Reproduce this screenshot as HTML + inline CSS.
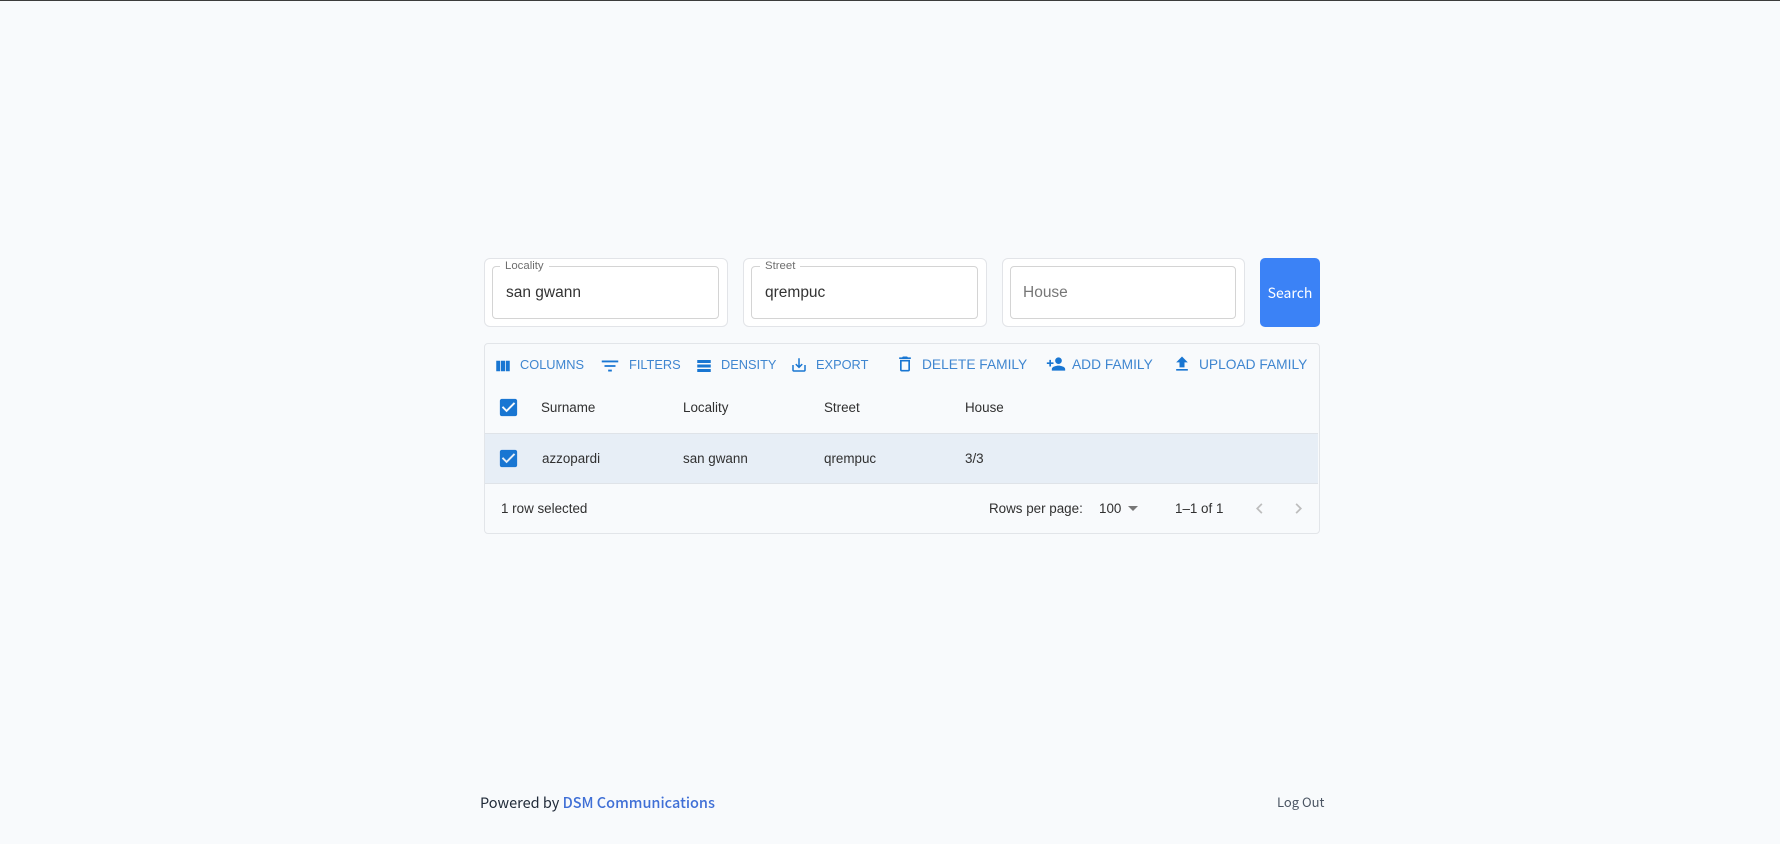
<!DOCTYPE html>
<html><head><meta charset="utf-8"><style>
html,body{margin:0;padding:0}
body{width:1780px;height:844px;background:#f8fafc;position:relative;overflow:hidden;font-family:"Liberation Sans",Arial,sans-serif;color:#222}
#w{position:absolute;left:0;top:0;width:1780px;height:844px;filter:blur(.3px)}
.a{position:absolute;white-space:nowrap}
.card{position:absolute;top:258px;height:67px;width:242px;border:1px solid #e2e4e8;border-radius:6px;background:#fff}
.in{position:absolute;top:266px;height:51px;width:225px;border:1px solid #d4d4d4;border-radius:4px;background:#fff}
.lab{position:absolute;top:260px;height:13px;line-height:13px;background:#fff;padding:0 5px;font-size:11.4px;color:#6e6e6e}
.v{position:absolute;top:283px;line-height:20px;font-size:15.5px;color:#333}
.b{position:absolute;top:357px;line-height:15px;font-size:12.8px;color:#3f86d0;white-space:nowrap}
.r{font-size:13.75px}
.c{position:absolute;line-height:16px;font-size:13.4px;color:#303030;white-space:nowrap}
svg{position:absolute;display:block}
.i{fill:#1976d2}
.s{font-family:"Noto Sans CJK JP","Liberation Sans",sans-serif}
</style></head><body><div id="w">
<div class="a" style="left:0;top:0;width:1780px;height:1px;background:#3c3c3c"></div>

<div class="card" style="left:484px"></div><div class="in" style="left:492px"></div>
<div class="lab" style="left:500px">Locality</div><div class="v" style="left:506px">san gwann</div>
<div class="card" style="left:743px"></div><div class="in" style="left:751px"></div>
<div class="lab" style="left:760px">Street</div><div class="v" style="left:765px">qrempuc</div>
<div class="card" style="left:1002px;width:241px"></div><div class="in" style="left:1010px;width:224px"></div>
<div class="v" style="left:1023px;color:#777">House</div>
<div class="a s" style="left:1260px;top:258px;width:60px;height:69px;background:#3b82f6;border-radius:5px;color:#fff;font-size:14px;line-height:71px;text-align:center">Search</div>

<div class="a" style="left:484px;top:343px;width:834px;height:189px;border:1px solid #e2e5e9;border-radius:4px"></div>
<div class="a" style="left:485px;top:433px;width:833px;height:49px;background:#e7eef6;border-top:1px solid #dfe3e8;border-bottom:1px solid #dfe3e8"></div>

<svg class="i" style="left:494px;top:357px" width="18" height="18" viewBox="0 0 24 24"><path d="M14.67 5v14H9.33V5h5.34zm1 14H21V5h-5.33v14zm-7.34 0V5H3v14h5.33z"/></svg>
<div class="b" style="left:520px">COLUMNS</div>
<svg class="i" style="left:599px;top:355px" width="22" height="22" viewBox="0 0 24 24"><path d="M10 18h4v-2h-4v2zM3 6v2h18V6H3zm3 7h12v-2H6v2z"/></svg>
<div class="b" style="left:629px">FILTERS</div>
<svg class="i" style="left:695px;top:357px" width="18" height="18" viewBox="0 0 24 24"><path d="M21,8H3V4h18V8z M21,10H3v4h18V10z M21,16H3v4h18V16z"/></svg>
<div class="b" style="left:721px">DENSITY</div>
<svg class="i" style="left:790px;top:356px" width="18" height="18" viewBox="0 0 24 24"><path d="M19 12v7H5v-7H3v7c0 1.1.9 2 2 2h14c1.1 0 2-.9 2-2v-7h-2zm-6 .67l2.59-2.58L17 11.5l-5 5-5-5 1.41-1.41L11 12.67V3h2z"/></svg>
<div class="b" style="left:816px">EXPORT</div>

<svg class="i" style="left:895px;top:354px" width="20" height="20" viewBox="0 0 24 24"><path d="M6 19c0 1.1.9 2 2 2h8c1.1 0 2-.9 2-2V7H6v12zM8 9h8v10H8V9zm7.5-5l-1-1h-5l-1 1H5v2h14V4z"/></svg>
<div class="b r" style="left:922px">DELETE FAMILY</div>
<svg class="i" style="left:1046px;top:354px" width="20" height="20" viewBox="0 0 24 24"><path d="M15 12c2.21 0 4-1.79 4-4s-1.79-4-4-4-4 1.79-4 4 1.79 4 4 4zm-9-2V7H4v3H1v2h3v3h2v-3h3v-2H6zm9 4c-2.67 0-8 1.34-8 4v2h16v-2c0-2.66-5.33-4-8-4z"/></svg>
<div class="b r" style="left:1072px">ADD FAMILY</div>
<svg class="i" style="left:1172px;top:354px" width="20" height="20" viewBox="0 0 24 24"><path d="M5 20h14v-2H5v2zm0-10h4v6h6v-6h4l-7-7-7 7z"/></svg>
<div class="b r" style="left:1199px">UPLOAD FAMILY</div>

<svg class="i" style="left:497px;top:396px" width="23" height="23" viewBox="0 0 24 24"><path d="M19 3H5c-1.11 0-2 .9-2 2v14c0 1.1.89 2 2 2h14c1.11 0 2-.9 2-2V5c0-1.1-.89-2-2-2zm-9 14l-5-5 1.41-1.41L10 14.17l7.59-7.59L19 8l-9 9z"/></svg>
<div class="c" style="left:541px;top:400px">Surname</div>
<div class="c" style="left:683px;top:400px">Locality</div>
<div class="c" style="left:824px;top:400px">Street</div>
<div class="c" style="left:965px;top:400px">House</div>

<svg class="i" style="left:497px;top:447px" width="23" height="23" viewBox="0 0 24 24"><path d="M19 3H5c-1.11 0-2 .9-2 2v14c0 1.1.89 2 2 2h14c1.11 0 2-.9 2-2V5c0-1.1-.89-2-2-2zm-9 14l-5-5 1.41-1.41L10 14.17l7.59-7.59L19 8l-9 9z"/></svg>
<div class="c" style="left:542px;top:451px">azzopardi</div>
<div class="c" style="left:683px;top:451px">san gwann</div>
<div class="c" style="left:824px;top:451px">qrempuc</div>
<div class="c" style="left:965px;top:451px">3/3</div>

<div class="c" style="left:501px;top:501px">1 row selected</div>
<div class="c" style="left:989px;top:501px">Rows per page:</div>
<div class="c" style="left:1099px;top:501px">100</div>
<svg style="left:1121px;top:496px;fill:#777" width="24" height="24" viewBox="0 0 24 24"><path d="M7 10l5 5 5-5z"/></svg>
<div class="c" style="left:1175px;top:501px">1–1 of 1</div>
<svg style="left:1249px;top:498px;fill:#bdbdbd" width="21" height="21" viewBox="0 0 24 24"><path d="M15.41 7.41L14 6l-6 6 6 6 1.41-1.41L10.83 12z"/></svg>
<svg style="left:1288px;top:498px;fill:#bdbdbd" width="21" height="21" viewBox="0 0 24 24"><path d="M10 6L8.59 7.41 13.17 12l-4.58 4.59L10 18l6-6z"/></svg>

<div class="a s" style="left:480px;top:793px;line-height:20px;font-size:14.5px;color:#1f2937">Powered by <span style="color:#3f6fd6;font-weight:500">DSM Communications</span></div>
<div class="a s" style="left:1277px;top:792px;line-height:20px;font-size:13px;color:#4b5563">Log Out</div>
</div></body></html>
